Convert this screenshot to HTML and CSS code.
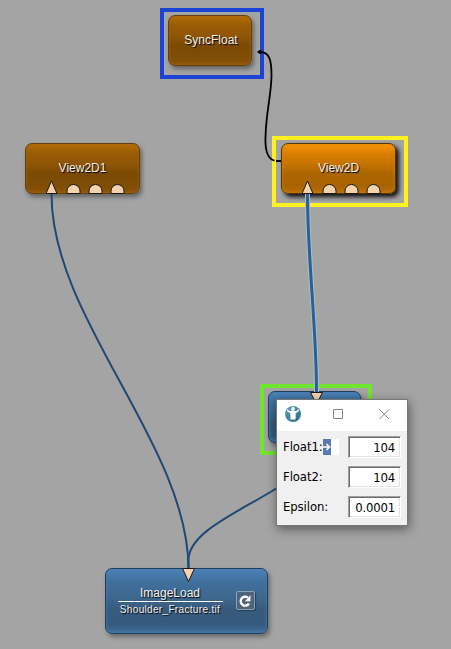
FILE: index.html
```
<!DOCTYPE html>
<html lang="en">
<head>
<meta charset="utf-8">
<title>Module network</title>
<link rel="stylesheet" href="styles.css">
</head>
<body>
<main class="canvas">
  <div class="frame frame-blue"></div>
  <div class="frame frame-yellow"></div>
  <div class="frame frame-green"></div>

  <section class="node orange sync"><span class="label">SyncFloat</span></section>
  <section class="node orange view1"><span class="label">View2D1</span></section>
  <section class="node orange active view2"><span class="label">View2D</span></section>
  <section class="node blue hidden-node"></section>
  <section class="node blue image">
    <div class="file">
      <span class="label">ImageLoad</span>
      <span class="label filename">Shoulder_Fracture.tif</span>
    </div>
    <div class="reload">
      <svg width="14" height="14" viewBox="0 0 14 14"><path d="M11 9.500A4.500 4.500 0 1 1 9.800 3.500" fill="none" stroke="#fff" stroke-width="2.400"/><path d="M12.500 1.300V7.200H6.800Z" fill="#fff"/></svg>
    </div>
  </section>

  <svg class="wires" width="451" height="649" viewBox="0 0 451 649">
    <g fill="none">
      <path d="M281 161H277C267 161 265 149 265.500 137C266 112 271.500 94 271.500 75C271.500 59 269 52 260 52" stroke="#000" stroke-width="1.800"/>
      <path d="M274.500 161h1.500" stroke="#fff02a" stroke-width="2"/>
      <path d="M51.500 194C51.500 319 188.500 445 188.500 569" stroke="#1f4a76" stroke-width="2"/>
      <path d="M277 488C239 512 188.500 532 188.500 560V569" stroke="#1f4a76" stroke-width="2"/>
      <path d="M307.500 194C307.500 260 316.500 326 316.500 392" stroke="#b5babd" stroke-width="5"/>
      <path d="M307.500 194C307.500 260 316.500 326 316.500 392" stroke="#24619d" stroke-width="3"/>
    </g>
    <path d="M257.500 52L260.500 50V54Z" stroke="#000"/>
    <g fill="#f3d2ad" stroke="#1b1712" stroke-width="1">
      <path d="M51.500 181L57 193.500H46Z"/>
      <path d="M67 193.500V191a6.500 6.500 0 0 1 13 0v2.500Z"/>
      <path d="M89 193.500V191a6.500 6.500 0 0 1 13 0v2.500Z"/>
      <path d="M111 193.500V191a6.500 6.500 0 0 1 13 0v2.500Z"/>
      <path d="M307.500 181L313 193.500H302Z"/>
      <path d="M323 193.500V191a6.500 6.500 0 0 1 13 0v2.500Z"/>
      <path d="M345 193.500V191a6.500 6.500 0 0 1 13 0v2.500Z"/>
      <path d="M367 193.500V191a6.500 6.500 0 0 1 13 0v2.500Z"/>
      <path d="M310.500 392.500H322.500L316.500 404Z"/>
      <path d="M182.500 568.500H194.500L188.500 581.500Z"/>
    </g>
  </svg>

  <section class="dialog">
    <header class="titlebar">
      <svg width="130" height="30" viewBox="0 0 130 30">
        <defs><linearGradient id="logo" x1="0" y1="0" x2="1" y2="1"><stop offset="0" stop-color="#5fa9bd"/><stop offset="1" stop-color="#246581"/></linearGradient></defs>
        <circle cx="16" cy="14" r="8" fill="url(#logo)"/>
        <circle cx="16" cy="9" r="1.900" fill="#fff"/>
        <path d="M10.300 9.300L12.800 11H19.200L21.700 9.300L22.200 10.800L18.600 13.500V19.500H13.400V13.500L9.800 10.800Z" fill="#fff"/>
        <path d="M56.500 9.500h9v9h-9zM102.500 9.500l9.500 9.500M112 9.500l-9.500 9.500" fill="none" stroke="#858585"/>
      </svg>
    </header>
    <div class="fields">
      <div class="row"><span class="name">Float1:</span><span class="drag"><svg width="8" height="16" viewBox="0 0 8 16"><path d="M0 8H6M3.500 5L6.500 8L3.500 11" fill="none" stroke="#fff" stroke-width="1.500"/></svg></span><span class="value">104</span></div>
      <div class="row"><span class="name">Float2:</span><span class="value">104</span></div>
      <div class="row"><span class="name">Epsilon:</span><span class="value">0.0001</span></div>
    </div>
  </section>
</main>
</body>
</html>
```
FILE: styles.css
```
body { margin: 0; }
.canvas { position: relative; width: 451px; height: 649px; overflow: hidden; background: #a4a4a4; font-family: "Liberation Sans", Arial, sans-serif; }
.frame, .node, .wires, .dialog { position: absolute; box-sizing: border-box; }
.frame { border: 4px solid; }
.frame-blue { left: 160px; top: 8px; width: 104px; height: 71px; border-color: #1d43d5; }
.frame-yellow { left: 272px; top: 136px; width: 136px; height: 71px; border-color: #fff020; }
.frame-green { left: 260px; top: 384px; width: 112px; height: 71px; border-color: #70e52e; }
.node { display: flex; align-items: center; justify-content: center; border: 1px solid; border-radius: 7px; box-shadow: 2px 3px 4px #5558; }
.orange { border-color: #63410d; background: linear-gradient(#b56d08, #9b5c05 18%, #8e5504 42%, #7b4a03 60%, #804e05 90%, #8e580b); box-shadow: 2px 3px 4px #444a, inset 0 0 3px #a5640c; }
.active { border-color: #553607; background: linear-gradient(#f89408, #d77c02 22%, #c47301 42%, #ac6500 60%, #a96402 85%, #b96e07); box-shadow: 3px 3px 4px #111, inset 0 0 3px #d98309; }
.blue { border-color: #203f60; background: linear-gradient(#4b82b8, #406f9c 20%, #3e698f 42%, #37597c 65%, #365b80 88%, #41719d); box-shadow: 2px 3px 4px #4449, inset 0 0 3px #4a83b7; }
.sync { left: 168px; top: 15px; width: 84px; height: 51px; }
.sync .label { margin: 0 0 2px 2px; }
.view1 { left: 25px; top: 143px; width: 115px; height: 51px; }
.view2 { left: 281px; top: 143px; width: 115px; height: 51px; }
.view1 .label, .view2 .label { margin-bottom: 1px; }
.hidden-node { left: 268px; top: 391px; width: 93px; height: 52px; }
.image { left: 105px; top: 568px; width: 163px; height: 66px; }
.label { font-size: 12px; line-height: 16px; color: #f0f0f0; text-shadow: 1px 1px 1px #000; white-space: nowrap; }
.image .file { width: 105px; margin-left: -1px; display: flex; flex-direction: column; align-items: center; }
.filename { width: 105px; font-size: 10px; line-height: 16px; border-top: 1px solid #fff; text-align: center; letter-spacing: .33px; }
.reload { display: flex; align-items: center; justify-content: center; box-sizing: border-box; width: 19px; height: 19px; margin-left: 13px; margin-top: -1px; border: 1px solid #8ba1b6; border-radius: 2px; background: #4d647b; box-shadow: 1px 1px 1px #263e54; }
.wires { left: 0; top: 0; }
.dialog { left: 276px; top: 399px; width: 132px; height: 127px; border: 1px solid #777; background: #f0f0f0; box-shadow: 1px 3px 10px #0007; }
.titlebar { height: 31px; background: #fff; }
.titlebar svg { display: block; }
.fields { display: grid; grid-auto-rows: 22px; row-gap: 8px; padding: 5px 6px 0; font: 13px/22px "DejaVu Sans Condensed", "DejaVu Sans", sans-serif; color: #000; }
.row { display: flex; align-items: center; }
.name { white-space: nowrap; letter-spacing: -.1px; }
.drag { display: flex; width: 16px; height: 16px; background: linear-gradient(90deg, #5877b4 8px, #fff 8px); }
.value { box-sizing: border-box; width: 53px; height: 22px; margin-left: auto; padding-right: 5px; border: 1px solid; border-color: #a0a0a0 #fff #fff #a0a0a0; background: #fff; box-shadow: inset 1px 1px #696969, inset -1px -1px #e3e3e3; text-align: right; line-height: 22px; letter-spacing: -.2px; }
```
